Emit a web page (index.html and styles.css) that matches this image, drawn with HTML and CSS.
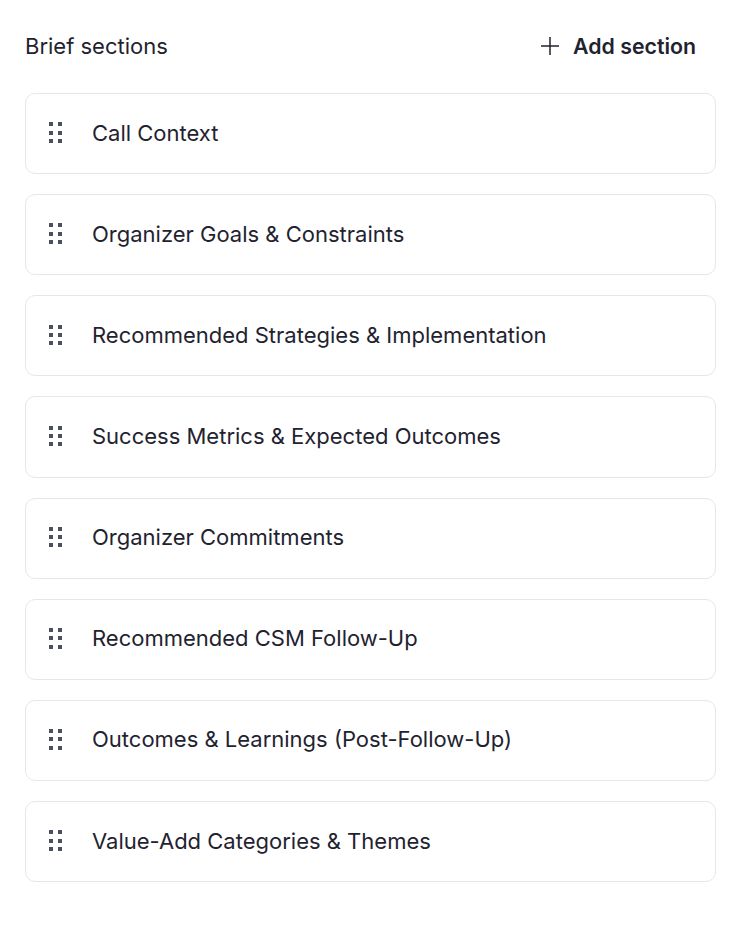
FILE: index.html
```html
<!DOCTYPE html>
<html>
<head>
<meta charset="utf-8">
<link rel="stylesheet" href="styles.css">
</head>
<body>
<div class="panel">
  <div class="header">
    <div class="title">Brief sections</div>
    <button class="add">
      <svg class="plus" width="20" height="20" viewBox="0 0 20 20"><path d="M10 1V19M1 10H19" stroke="#1f2330" stroke-width="1.5" fill="none"/></svg>
      <span>Add section</span>
    </button>
  </div>
  <div class="list">
    <div class="card"><span class="grip"><i></i><i></i><i></i><i></i><i></i><i></i></span><span class="label">Call Context</span></div>
    <div class="card"><span class="grip"><i></i><i></i><i></i><i></i><i></i><i></i></span><span class="label">Organizer Goals &amp; Constraints</span></div>
    <div class="card"><span class="grip"><i></i><i></i><i></i><i></i><i></i><i></i></span><span class="label">Recommended Strategies &amp; Implementation</span></div>
    <div class="card"><span class="grip"><i></i><i></i><i></i><i></i><i></i><i></i></span><span class="label">Success Metrics &amp; Expected Outcomes</span></div>
    <div class="card"><span class="grip"><i></i><i></i><i></i><i></i><i></i><i></i></span><span class="label">Organizer Commitments</span></div>
    <div class="card"><span class="grip"><i></i><i></i><i></i><i></i><i></i><i></i></span><span class="label">Recommended CSM Follow-Up</span></div>
    <div class="card"><span class="grip"><i></i><i></i><i></i><i></i><i></i><i></i></span><span class="label">Outcomes &amp; Learnings (Post-Follow-Up)</span></div>
    <div class="card"><span class="grip"><i></i><i></i><i></i><i></i><i></i><i></i></span><span class="label">Value-Add Categories &amp; Themes</span></div>
  </div>
</div>
</body>
</html>
```
FILE: styles.css
```css
* { box-sizing: border-box; }
html, body { margin: 0; padding: 0; background: #ffffff; }
body { font-family: Inter, "Noto Sans", sans-serif; color: #1f2330; }
.panel { padding: 24px 28px 0 25px; }
.header { display: flex; justify-content: space-between; align-items: center; height: 44px; padding-right: 20px; }
.title { font-size: 22px; font-weight: 400; color: #1f2330; }
.add { display: flex; align-items: center; gap: 13px; background: none; border: 0; padding: 0; font-family: inherit; font-size: 21.3px; font-weight: 600; color: #1f2330; cursor: pointer; }
.plus { display: block; }
.list { display: flex; flex-direction: column; gap: 20px; margin-top: 25px; }
.card { height: 81.15px; border: 1px solid #e5e7eb; border-radius: 10px; display: flex; align-items: center; padding-left: 23px; padding-bottom: 2px; }
.grip { display: grid; grid-template-columns: 4px 4px; column-gap: 4.5px; row-gap: 4.3px; width: 13px; margin-right: 30px; }
.grip i { display: block; width: 4px; height: 4px; background: #4b5060; }
.label { font-size: 22px; color: #1f2330; }
```
